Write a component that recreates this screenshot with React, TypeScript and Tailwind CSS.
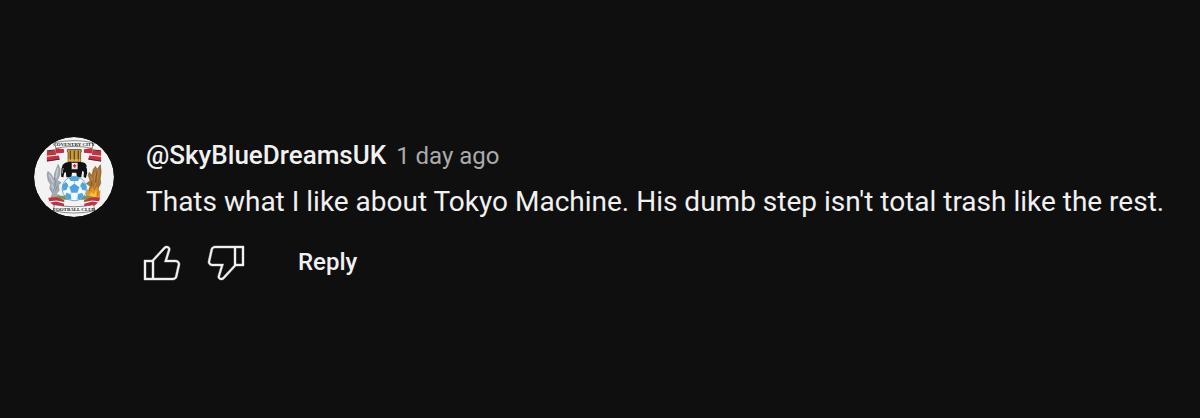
import React from 'react';

const Crest = () => (
  <svg viewBox="11 12 242 242" className="size-20 rounded-full" role="img" aria-label="SkyBlueDreamsUK">
    <circle cx="132" cy="133" r="121" fill="#f3f3f4" />

    {/* Top ribbon */}
    <path d="M50 55l26-3 2 14-28 3z M76 45l26 4v11l-24 2z M50 72l36-4 3 12-39 5z" fill="#c72f3e" />
    <path d="M214 55l-26-3-2 14 28 3z M188 45l-26 4v11l24 2z M214 72l-36-4-3 12 39 5z" fill="#c72f3e" />
    <path d="M50 54l26-3M50 85l38-6M214 54l-26-3M214 85l-38-6" stroke="#3c2a30" strokeWidth="3" />
    <path d="M74 29q58-12 116 0l-3 17q-55-11-110 0z" fill="#f7f7f7" stroke="#555" strokeWidth="2" />
    <text x="132" y="40" textAnchor="middle" fontSize="15" fontWeight="700" fill="#222" className="font-['Liberation_Serif',serif]">
      COVENTRY CITY
    </text>

    {/* Castle */}
    <path d="M112 50h42v7h-2v32h-38V57h-2z" fill="#c99a3b" stroke="#4a3514" strokeWidth="2" />
    <path d="M121 53v33M133 53v33M145 53v33" stroke="#6b4a18" strokeWidth="4" />
    <path d="M114 82h38" stroke="#ecc66a" strokeWidth="3" />

    {/* Elephant */}
    <path d="M98 96q6-8 18-8h34q16 0 20 10l2 22-4 16-7-3 1-15-5-4-3 20h-13l-2-14h-13l-2 14h-15l-2-17-5 5-2 12-7-2 1-24z" fill="#111" />
    <path d="M124 89h20v21h-20z" fill="#f4efef" stroke="#111" strokeWidth="2" />
    <path d="M134 94v11M129 99h10" stroke="#cf2f3b" strokeWidth="4" />
    <path d="M100 106q-5 7-3 16M169 102q7 7 5 16" fill="none" stroke="#eee" strokeWidth="2" />

    {/* Silver eagle */}
    <path d="M84 95q9 14 5 31l-8 18 12 6-8 7 2 17-10 11 13 4-6 6H62l5-12-8-14 2-14-7-11-3-17 2-11 10 9 8 16 3-21 5-12z" fill="#a4acb4" stroke="#858e97" strokeWidth="2" />
    <path d="M57 126l13 24M64 156l10 19M83 107l-5 29" stroke="#c9cfd4" strokeWidth="4" />
    <path d="M73 134l3 20-6 22M82 160l-7 15" fill="none" stroke="#858f98" strokeWidth="3" />

    {/* Phoenix */}
    <path d="M212 96q4 24-1 43l2 13-8 15 2 14-17 10-15-13 6-17-11-8 11-9-6-16 3-9 9 9 3-18 7-9 5 9z" fill="#a67433" stroke="#83592a" strokeWidth="2" />
    <path d="M207 110l-5 31M196 119l-2 24M182 130l9 22M198 151l-5 16" stroke="#c08c43" strokeWidth="3" />
    <path d="M202 117l-5 32M187 145l-3 15" stroke="#83592a" strokeWidth="3" />

    {/* Flames */}
    <path d="M168 187l3-18 8 8 8-15 7 11 8-13 3 17 7-3-2 23-20 7-20-4z" fill="#e5951e" />
    <path d="M176 191l9-13 6 8 8-13 2 16-9 9z" fill="#f4c23d" />
    <path d="M173 196l8-6M206 178l-4 11" stroke="#c0621c" strokeWidth="3" />

    {/* Base and ball */}
    <path d="M62 194l32-4h74l38 5-14 7H78z" fill="#6f9a57" />
    <circle cx="133" cy="168" r="37" fill="#f4f9fd" stroke="#467fae" strokeWidth="2" />
    <path d="M133 153l15 11-6 17h-18l-6-17z" fill="#4ba5df" />
    <path d="M116 136q17-9 34 0l-6 9h-22z" fill="#4ba5df" />
    <path d="M98 156l10-8 7 10-6 14-11 2q-3-9 0-18zM168 156l-10-8-7 10 6 14 11 2q3-9 0-18z" fill="#4ba5df" />
    <path d="M105 191l4-10 13 4 2 16q-11-1-19-10zM161 191l-4-10-13 4-2 16q11-1 19-10z" fill="#4ba5df" />
    <path d="M133 153v-8M148 164l7-4M142 181l5 5M124 181l-5 5M118 164l-7-4" stroke="#8bb8d8" strokeWidth="2" />

    {/* Bottom ribbon */}
    <path d="M54 196l26-2 22 9 1 6-24-5-22 2z" fill="#c72f3e" />
    <path d="M211 196l-26-2-22 9-1 6 24-5 22 2z" fill="#c72f3e" />
    <path d="M60 210l18-3 24 7v7l-30-1z" fill="#c72f3e" />
    <path d="M205 210l-18-3-24 7v7l30-1z" fill="#c72f3e" />
    <path d="M73 217q59 12 118 0l4 18q-63 14-126 0z" fill="#f7f7f7" stroke="#555" strokeWidth="2" />
    <text x="132" y="236" textAnchor="middle" fontSize="15" fontWeight="700" fill="#222" className="font-['Liberation_Serif',serif]">
      FOOTBALL CLUB
    </text>
  </svg>
);

const LikeIcon = () => (
  <svg viewBox="0 0 24 24" className="size-12" fill="currentColor" stroke="currentColor" strokeWidth="0.2" aria-hidden="true">
    <path d="M18.77,11h-4.23l1.52-4.94C16.38,5.03,15.54,4,14.38,4c-0.58,0-1.14,0.24-1.52,0.65L7,11H3v10h4h1h9.43c1.06,0,1.98-0.67,2.19-1.61l1.34-6C21.23,12.15,20.18,11,18.77,11z M7,20H4v-8h3V20z M19.98,13.17l-1.34,6C18.54,19.65,18.03,20,17.43,20H8v-8.61l5.6-6.06C13.79,5.12,14.08,5,14.38,5c0.26,0,0.5,0.11,0.63,0.3c0.07,0.1,0.15,0.26,0.09,0.47l-1.52,4.94L13.18,12h1.35h4.23c0.41,0,0.8,0.17,1.03,0.46C19.92,12.61,20.05,12.86,19.98,13.17z" />
  </svg>
);

const DislikeIcon = () => (
  <svg viewBox="0 0 24 24" className="size-12" fill="currentColor" stroke="currentColor" strokeWidth="0.2" aria-hidden="true">
    <path d="M17,4h-1H6.57C5.5,4,4.59,4.67,4.38,5.61l-1.34,6C2.77,12.85,3.82,14,5.23,14h4.23l-1.52,4.94C7.62,19.97,8.46,21,9.62,21c0.58,0,1.14-0.24,1.52-0.65L17,14h4V4H17z M10.4,19.67C10.21,19.88,9.92,20,9.62,20c-0.26,0-0.5-0.11-0.63-0.3c-0.07-0.1-0.15-0.26-0.09-0.47l1.52-4.94l0.4-1.29H9.46H5.23c-0.41,0-0.8-0.17-1.03-0.46c-0.12-0.15-0.25-0.4-0.18-0.72l1.34-6C5.46,5.35,5.97,5,6.57,5H16v8.61L10.4,19.67z M20,13h-3V5h3V13z" />
  </svg>
);

const App = () => {
  return (
    <main className="flex min-h-screen items-center bg-[#0f0f0f] px-[34px] pt-1 font-[Roboto,sans-serif] text-[#f1f1f1]">
      <article className="flex w-full items-start gap-8">
        <a href="#channel" className="shrink-0">
          <Crest />
        </a>
        <div className="-mr-6 min-w-0 flex-1">
          <header className="flex items-baseline gap-2.5 text-[26px] leading-9">
            <a href="#channel" className="font-medium">@SkyBlueDreamsUK</a>
            <a href="#comment" className="text-2xl leading-9 text-[#aaaaaa]">1 day ago</a>
          </header>
          <p className="mt-2 text-[28px] leading-10">
            Thats what I like about Tokyo Machine. His dumb step isn't total trash like the rest.
          </p>
          <div className="-ml-2 mt-4 flex items-center gap-4">
            <button type="button" aria-label="Like">
              <LikeIcon />
            </button>
            <button type="button" aria-label="Dislike">
              <DislikeIcon />
            </button>
            <button type="button" className="ml-8 text-2xl font-medium">
              Reply
            </button>
          </div>
        </div>
      </article>
    </main>
  );
};

export default App;
